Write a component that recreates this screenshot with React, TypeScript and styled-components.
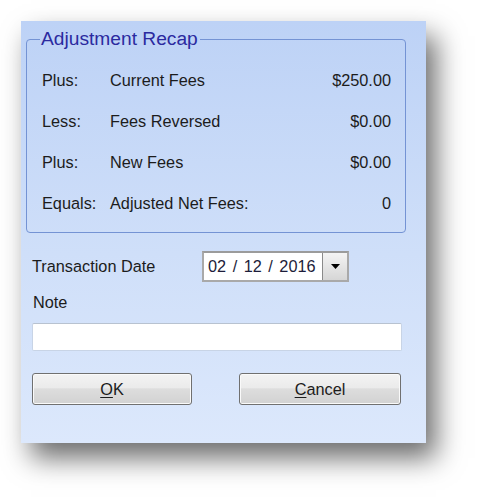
import React from 'react';
import styled, { createGlobalStyle } from 'styled-components';

const GlobalStyle = createGlobalStyle`
    html, body {
        margin: 0;
        padding: 0;
        background: #ffffff;
    }
    body {
        font-family: 'Liberation Sans', Arial, sans-serif;
    }
`;

const Page = styled.div`
    width: 481px;
    height: 497px;
    padding: 21px 0 0 21px;
    box-sizing: border-box;
    overflow: hidden;
`;

const Dialog = styled.div`
    width: 405px;
    height: 422px;
    box-sizing: border-box;
    padding: 7px 20px 0 5px;
    background: linear-gradient(180deg, #bdd2f6 0%, #cfdff9 55%, #dce8fc 100%);
    box-shadow: 10px 15px 26px rgba(0, 0, 0, 0.58);
    font-size: 16.3px;
    color: #1c1c1c;
`;

const Group = styled.fieldset`
    margin: 0;
    padding: 10px 14px 12px 15px;
    border: 1px solid #7493d4;
    border-radius: 4px;
    height: 205px;
    box-sizing: border-box;
`;

const Legend = styled.legend`
    font-size: 19.2px;
    color: #2b2aa0;
    padding: 0 2px 0 1px;
    margin-left: -2px;
    line-height: 22px;
`;

const Recap = styled.div`
    display: grid;
    grid-template-columns: 68px 1fr auto;
    grid-auto-rows: 41px;
    align-items: center;
`;

const Cell = styled.span<{ $right?: boolean }>`
    text-align: ${(p) => (p.$right ? 'right' : 'left')};
    white-space: nowrap;
`;

const Form = styled.div`
    padding: 18px 0 0 6px;
    display: flex;
    flex-direction: column;
`;

const DateRow = styled.div`
    display: flex;
    align-items: center;
`;

const Label = styled.span<{ $width?: number }>`
    width: ${(p) => (p.$width ? `${p.$width}px` : 'auto')};
    white-space: nowrap;
`;

const DateBox = styled.div`
    display: flex;
    width: 147px;
    height: 31px;
    box-sizing: border-box;
    border: 2px solid #a9a9a9;
    border-top-color: #9b9b9b;
    background: #ffffff;
`;

const DateText = styled.span`
    flex: 1;
    padding-left: 4px;
    line-height: 27px;
    color: #1d1d3a;
    word-spacing: 2px;
`;

const DropButton = styled.div`
    width: 24px;
    border-left: 1px solid #8a8a8a;
    background: linear-gradient(180deg, #f4f4f4, #d6d6d6);
    display: flex;
    align-items: center;
    justify-content: center;
`;

const NoteLabel = styled.span`
    margin-top: 11px;
    padding-left: 1px;
`;

const NoteInput = styled.div`
    margin-top: 11px;
    width: 370px;
    height: 28px;
    box-sizing: border-box;
    border: 1px solid #c8d4e6;
    border-top-color: #b8c2d0;
    border-radius: 2px;
    background: #ffffff;
`;

const Buttons = styled.div`
    display: flex;
    justify-content: space-between;
    width: 369px;
    margin-top: 22px;
`;

const Button = styled.button<{ $width: number }>`
    width: ${(p) => p.$width}px;
    height: 32px;
    border: 1px solid #707070;
    border-radius: 3px;
    background: linear-gradient(180deg, #f3f3f3 0%, #ebebeb 45%, #dddddd 50%, #d2d2d2 100%);
    box-shadow: inset 0 0 0 1px #fafafa;
    font-family: inherit;
    font-size: 16.3px;
    color: #1c1c1c;
    padding: 0;

    u {
        text-decoration-thickness: 1px;
        text-underline-offset: 2px;
    }
`;

const rows = [
    { op: 'Plus:', label: 'Current Fees', value: '$250.00' },
    { op: 'Less:', label: 'Fees Reversed', value: '$0.00' },
    { op: 'Plus:', label: 'New Fees', value: '$0.00' },
    { op: 'Equals:', label: 'Adjusted Net Fees:', value: '0' },
];

export default function App() {
    return (
        <Page>
            <GlobalStyle />
            <Dialog>
                <Group>
                    <Legend>Adjustment Recap</Legend>
                    <Recap>
                        {rows.map((r, i) => (
                            <React.Fragment key={i}>
                                <Cell>{r.op}</Cell>
                                <Cell>{r.label}</Cell>
                                <Cell $right>{r.value}</Cell>
                            </React.Fragment>
                        ))}
                    </Recap>
                </Group>
                <Form>
                    <DateRow>
                        <Label $width={170}>Transaction Date</Label>
                        <DateBox>
                            <DateText>02 / 12 / 2016</DateText>
                            <DropButton>
                                <svg width="9" height="5" viewBox="0 0 9 5">
                                    <path d="M0 0 H9 L4.5 5 Z" fill="#000" />
                                </svg>
                            </DropButton>
                        </DateBox>
                    </DateRow>
                    <NoteLabel>Note</NoteLabel>
                    <NoteInput />
                    <Buttons>
                        <Button $width={160}>
                            <u>O</u>K
                        </Button>
                        <Button $width={162}>
                            <u>C</u>ancel
                        </Button>
                    </Buttons>
                </Form>
            </Dialog>
        </Page>
    );
}
